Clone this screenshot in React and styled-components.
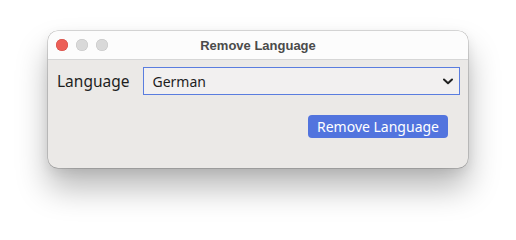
import React from "react";
import styled, { createGlobalStyle } from "styled-components";

const GlobalStyle = createGlobalStyle`
  html, body { margin: 0; padding: 0; background: #ffffff; }
  body { font-family: "Noto Sans", "Liberation Sans", sans-serif; }
`;

const Page = styled.div`
  padding: 31px 0 0 48px;
  height: 235px;
  box-sizing: border-box;
`;

const Window = styled.div`
  width: 420px;
  height: 137px;
  border-radius: 10px;
  overflow: hidden;
  background: #ebe9e7;
  display: flex;
  flex-direction: column;
  box-shadow: 0 0 0 0.5px rgba(0, 0, 0, 0.28), 0 20px 32px rgba(0, 0, 0, 0.28),
    0 4px 12px rgba(0, 0, 0, 0.08);
`;

const TitleBar = styled.div`
  height: 28px;
  flex: none;
  background: #fcfcfc;
  border-bottom: 1px solid #d6d6d6;
  display: grid;
  grid-template-columns: 1fr auto 1fr;
  align-items: center;
  padding: 0 8px;
`;

const Lights = styled.div`
  display: flex;
  gap: 8px;
`;

const Light = styled.span`
  width: 12px;
  height: 12px;
  border-radius: 50%;
  background: ${(p) => p.$color};
  box-shadow: inset 0 0 0 0.5px ${(p) => p.$ring};
`;

const Title = styled.div`
  font-family: "Liberation Sans", Arial, sans-serif;
  font-weight: 700;
  font-size: 13px;
  color: #4b4b4b;
`;

const Body = styled.div`
  padding: 7px 8px 0 8px;
  display: flex;
  flex-direction: column;
`;

const Row = styled.div`
  display: flex;
  align-items: center;
  gap: 14px;
`;

const Label = styled.label`
  font-size: 15.5px;
  color: #1e1e1e;
  padding-left: 1px;
`;

const Select = styled.div`
  flex: 1;
  height: 28px;
  box-sizing: border-box;
  border: 1px solid #5a7ddf;
  background: #f2f0f0;
  display: flex;
  align-items: center;
  justify-content: space-between;
  padding: 0 6px 0 8px;
  font-size: 14px;
  color: #1e1e1e;
`;

const ButtonRow = styled.div`
  display: flex;
  justify-content: flex-end;
  margin-top: 20px;
  padding-right: 12px;
`;

const Button = styled.button`
  width: 140px;
  height: 23px;
  border: none;
  border-radius: 4px;
  background: #5274de;
  color: #ffffff;
  font-family: "Noto Sans", "Liberation Sans", sans-serif;
  font-size: 14px;
  padding: 0;
  display: flex;
  align-items: center;
  justify-content: center;
`;

const Chevron = () => (
  <svg width="10" height="7" viewBox="0 0 10 7">
    <path d="M1 1.5 L5 5.2 L9 1.5" fill="none" stroke="#222" strokeWidth="2" strokeLinecap="round" strokeLinejoin="round" />
  </svg>
);

export default function App() {
  return (
    <>
      <GlobalStyle />
      <Page>
        <Window>
          <TitleBar>
            <Lights>
              <Light $color="#ec5f57" $ring="#d04a42" />
              <Light $color="#d9d9d9" $ring="#c4c4c4" />
              <Light $color="#d9d9d9" $ring="#c4c4c4" />
            </Lights>
            <Title>Remove Language</Title>
            <span />
          </TitleBar>
          <Body>
            <Row>
              <Label>Language</Label>
              <Select>
                <span>German</span>
                <Chevron />
              </Select>
            </Row>
            <ButtonRow>
              <Button>Remove Language</Button>
            </ButtonRow>
          </Body>
        </Window>
      </Page>
    </>
  );
}
